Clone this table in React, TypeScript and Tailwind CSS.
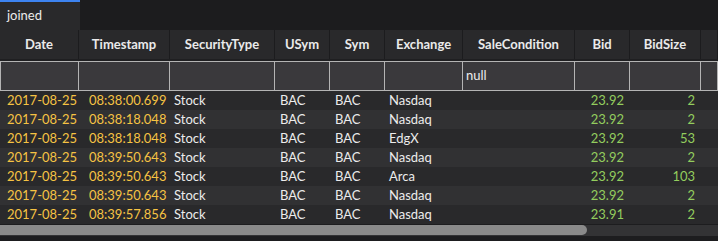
import React from "react";

const cols = "grid-cols-[79px_91px_105px_55px_55px_78px_112px_55px_71px_1fr]";
const headers = ["Date", "Timestamp", "SecurityType", "USym", "Sym", "Exchange", "SaleCondition", "Bid", "BidSize", ""];

const rows = [
  ["2017-08-25", "08:38:00.699", "Stock", "BAC", "BAC", "Nasdaq", "", "23.92", "2"],
  ["2017-08-25", "08:38:18.048", "Stock", "BAC", "BAC", "Nasdaq", "", "23.92", "2"],
  ["2017-08-25", "08:38:18.048", "Stock", "BAC", "BAC", "EdgX", "", "23.92", "53"],
  ["2017-08-25", "08:39:50.643", "Stock", "BAC", "BAC", "Nasdaq", "", "23.92", "2"],
  ["2017-08-25", "08:39:50.643", "Stock", "BAC", "BAC", "Arca", "", "23.92", "103"],
  ["2017-08-25", "08:39:50.643", "Stock", "BAC", "BAC", "Nasdaq", "", "23.92", "2"],
  ["2017-08-25", "08:39:57.856", "Stock", "BAC", "BAC", "Nasdaq", "", "23.91", "2"],
];

export default function App() {
  return (
    <div
      className="w-[718px] h-[241px] bg-[#1d1d1f] overflow-hidden text-[13px] text-[#ececec] flex flex-col"
      style={{ fontFamily: "Lato, 'Open Sans', sans-serif" }}
    >
      <div className="h-[30px] flex bg-[#1c1c1e]">
        <div className="w-[80px] bg-[#29292b] border-t-2 border-[#3d83f0] pl-[7px] flex items-center leading-none pb-[1px]">
          joined
        </div>
      </div>
      <div className={`grid ${cols} h-[31px] bg-[#29292b] border-b-2 border-[#1f1f21]`}>
        {headers.map((h, i) => (
          <div key={i} className="flex items-center justify-center font-bold border-r border-[#1c1c1e] text-[#eaeaea]">
            {h}
          </div>
        ))}
      </div>
      <div className={`grid ${cols} h-[30px] bg-[#3a393c]`}>
        {headers.map((_, i) => (
          <div key={i} className="border border-[#b4b4b4] -ml-px first:ml-0 flex items-center pl-[3px] text-[#ececec]">
            {i === 6 ? "null" : ""}
          </div>
        ))}
      </div>
      {rows.map((r, ri) => (
        <div key={ri} className={`grid ${cols} h-[19px] items-center ${ri % 2 === 0 ? "bg-[#29292b]" : "bg-[#313133]"}`}>
          <div className="pl-[7px] text-[#f6c343]">{r[0]}</div>
          <div className="pl-[10px] text-[#f6c343]">{r[1]}</div>
          <div className="pl-[4px]">{r[2]}</div>
          <div className="pl-[5px]">{r[3]}</div>
          <div className="pl-[5px]">{r[4]}</div>
          <div className="pl-[4px]">{r[5]}</div>
          <div>{r[6]}</div>
          <div className="text-right pr-[6px] text-[#93cd5e]">{r[7]}</div>
          <div className="text-right pr-[6px] text-[#93cd5e]">{r[8]}</div>
          <div></div>
        </div>
      ))}
      <div className="h-[11px] bg-[#333335] mt-px flex">
        <div className="w-[587px] h-[10px] bg-[#8a8a8a] rounded-r-[5px]"></div>
      </div>
    </div>
  );
}
